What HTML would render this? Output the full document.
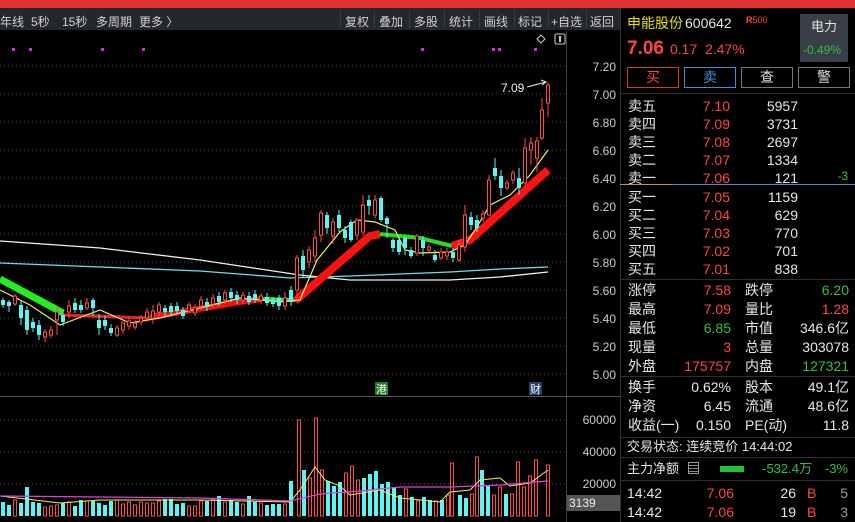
<!DOCTYPE html>
<html style="width:855px;height:522px;overflow:hidden"><head><meta charset="utf-8"><style>
*{margin:0;padding:0;box-sizing:border-box}
html,body{overflow:hidden}
body{width:855px;height:522px;background:#000;overflow:hidden;position:relative;font-family:"Liberation Sans","Noto Sans CJK SC",sans-serif;color:#e0e0e0;font-size:13px}
.a{position:absolute;white-space:nowrap;line-height:1}
.r{color:#ff4444}.g{color:#2fc144}.y{color:#e8e000}.w{color:#e6e6e6}
.tb{position:absolute;top:8px;left:0;width:620px;height:22px;background:#24272d;font-size:12px;color:#d0d0d0}
.tb span{position:absolute;top:5px}
.sep{position:absolute;top:2px;width:1px;height:18px;background:#3a3d44}
.btn{position:absolute;top:67px;width:52px;height:21px;border:1px solid #777;text-align:center;font-size:14px;line-height:19px}
.hl{position:absolute;left:620px;width:235px;height:1px;background:#2e2e2e}
.ax{position:absolute;left:570px;width:46px;text-align:right;font-size:12px;color:#ccc;line-height:1}
</style></head><body>
<div style="position:absolute;left:0;top:0;width:855px;height:8px;background:#e33232"></div>
<div class="tb">
<span style="left:0">年线</span><span style="left:31px">5秒</span><span style="left:62px">15秒</span><span style="left:96px">多周期</span><span style="left:139px">更多 〉</span>
<div class="sep" style="left:340px"></div><span style="left:345px">复权</span>
<div class="sep" style="left:374px"></div><span style="left:379px">叠加</span>
<div class="sep" style="left:409px"></div><span style="left:414px">多股</span>
<div class="sep" style="left:444px"></div><span style="left:449px">统计</span>
<div class="sep" style="left:479px"></div><span style="left:484px">画线</span>
<div class="sep" style="left:514px"></div><span style="left:518px">标记</span>
<div class="sep" style="left:548px"></div><span style="left:551px">+自选</span>
<div class="sep" style="left:586px"></div><span style="left:590px">返回</span>
</div>

<svg width="620" height="522" style="position:absolute;left:0;top:0">
<g stroke="#4a4a4a" stroke-dasharray="1,3">
<path d="M0 66H566M0 94H566M0 122H566M0 150H566M0 178H566M0 206H566M0 234H566M0 262H566M0 290H566M0 318H566M0 346H566M0 374H566M0 420H566M0 452H566M0 484H566"/>
</g>
<path d="M566.5 31V522" stroke="#444"/>
<path d="M0 396.5H620" stroke="#555"/>
<g fill="#d030d0"><rect x="12" y="48" width="3" height="3"/><rect x="29" y="48" width="3" height="3"/><rect x="101" y="48" width="3" height="3"/><rect x="142" y="48" width="3" height="3"/><rect x="421" y="48" width="3" height="3"/><rect x="492" y="48" width="3" height="3"/><rect x="498" y="48" width="3" height="3"/><rect x="534" y="48" width="3" height="3"/></g>
<path d="M541 35l4 4-4 4-4-4z" fill="none" stroke="#ccc"/>
<rect x="555" y="34" width="10" height="10" rx="1.5" fill="none" stroke="#ccc"/><rect x="559" y="36" width="2" height="6" fill="#ccc"/>
<polyline fill="none" stroke="#f0f0f0" stroke-width="1.3" points="0,241 100,248 200,260 300,275 350,280 450,280 500,277 548,272"/>
<polyline fill="none" stroke="#6fe0e0" stroke-width="1.3" points="0,263 100,267 200,271 290,278 350,276 450,272 500,269 548,267"/>
<polyline fill="none" stroke="#22ee22" stroke-width="7" points="0,279 63,313"/>
<polyline fill="none" stroke="#ee2222" stroke-width="3" points="63,315 150,318"/>
<polyline fill="none" stroke="#ee1111" stroke-width="6" points="150,317 240,302 262,299"/>
<polyline fill="none" stroke="#22ee22" stroke-width="4" points="262,299 295,300"/>
<polyline fill="none" stroke="#ff1111" stroke-width="8" points="295,301 370,236 380,234"/>
<polyline fill="none" stroke="#22dd22" stroke-width="4" points="380,234 420,238 452,246"/>
<polyline fill="none" stroke="#ff1111" stroke-width="8" points="452,246 470,240 548,170"/>
<polyline fill="none" stroke="#f0f060" stroke-width="1.2" points="0,290 30,305 60,325 100,310 130,323 160,318 200,308 240,298 280,302 300,300 317,260 340,232 357,220 375,222 395,230 405,250 420,253 450,252 465,245 475,230 490,205 510,195 530,175 548,150"/>
<path stroke="#5cf5f5" stroke-width="1" d="M3 298V308M9 300V312M21 300V325M27 306V335M33 318V332M39 320V340M63 310V326M75 298V313M81 300V313M93 298V316M99 314V335M105 316V330M111 324V336M165 305V316M171 303V316M177 302V314M183 307V319M207 298V311M219 292V306M231 288V302M237 291V304M249 292V305M255 290V303M267 293V306M273 297V307M279 295V310M291 286V306M303 250V278M327 212V234M339 210V232M345 226V243M351 220V242M369 195V215M381 196V222M387 216V238M393 238V252M399 238V255M405 236V255M411 247V258M423 236V256M435 250V262M453 248V262M471 212V230M477 215V232M495 158V180M501 170V196M519 168V195"/>
<path fill="#5cf5f5" d="M1 300h4v5h-4zM7 302h4v4h-4zM19 305h4v13h-4zM25 310h4v20h-4zM31 322h4v6h-4zM37 325h4v10h-4zM61 315h4v7h-4zM73 303h4v7h-4zM79 305h4v5h-4zM91 300h4v8h-4zM97 320h4v8h-4zM103 320h4v6h-4zM109 328h4v5h-4zM163 308h4v4h-4zM169 306h4v6h-4zM175 306h4v5h-4zM181 310h4v6h-4zM205 302h4v5h-4zM217 296h4v6h-4zM229 292h4v6h-4zM235 295h4v5h-4zM247 296h4v6h-4zM253 294h4v5h-4zM265 297h4v6h-4zM271 300h4v4h-4zM277 298h4v8h-4zM289 290h4v12h-4zM301 256h4v14h-4zM325 215h4v13h-4zM337 215h4v13h-4zM343 230h4v8h-4zM349 222h4v18h-4zM367 200h4v6h-4zM379 198h4v22h-4zM385 218h4v6h-4zM391 240h4v8h-4zM397 240h4v12h-4zM403 238h4v10h-4zM409 250h4v6h-4zM421 240h4v8h-4zM433 255h4v5h-4zM451 252h4v6h-4zM469 217h4v8h-4zM475 220h4v8h-4zM493 168h4v8h-4zM499 176h4v12h-4zM517 178h4v10h-4z"/>
<path stroke="#ff4a4a" stroke-width="1" d="M15 294V306M45 329V342M51 326V338M57 308V335M69 300V318M87 298V310M117 325V337M123 320V334M129 317V330M135 320V330M141 315V325M147 308V322M153 305V324M159 302V316M189 302V313M195 304V316M201 296V310M213 294V308M225 290V304M243 292V304M261 293V304M285 292V310M297 255V300M309 246V268M315 230V262M321 210V242M333 218V244M357 218V240M363 195V236M375 195V218M417 234V256M429 244V252M441 248V260M447 248V260M459 240V262M465 205V252M483 210V222M489 175V216M507 180V190M513 170V184M525 138V186M531 137V165M537 137V172M542 98V140M548 82V117"/>
<path fill="#000" stroke="#ff4a4a" stroke-width="1" d="M13.5 296h3v8h-3zM43.5 332h3v5h-3zM49.5 330h3v5h-3zM55.5 312h3v8h-3zM67.5 306h3v6h-3zM85.5 303h3v5h-3zM115.5 328h3v7h-3zM121.5 323h3v7h-3zM127.5 321h3v5h-3zM133.5 323h3v4h-3zM139.5 318h3v4h-3zM145.5 312h3v6h-3zM151.5 311h3v7h-3zM157.5 305h3v7h-3zM187.5 305h3v6h-3zM193.5 308h3v5h-3zM199.5 300h3v6h-3zM211.5 298h3v6h-3zM223.5 293h3v7h-3zM241.5 295h3v5h-3zM259.5 296h3v4h-3zM283.5 298h3v8h-3zM295.5 258h3v32h-3zM307.5 250h3v12h-3zM313.5 238h3v18h-3zM319.5 213h3v22h-3zM331.5 222h3v14h-3zM355.5 220h3v15h-3zM361.5 205h3v27h-3zM373.5 200h3v15h-3zM415.5 236h3v17h-3zM427.5 247h3v3h-3zM439.5 252h3v6h-3zM445.5 252h3v4h-3zM457.5 245h3v15h-3zM463.5 215h3v32h-3zM481.5 214h3v4h-3zM487.5 180h3v35h-3zM505.5 183h3v5h-3zM511.5 173h3v7h-3zM523.5 148h3v35h-3zM529.5 143h3v7h-3zM535.5 141h3v17h-3zM540.5 110h3v28h-3zM546.5 85h3v18h-3z"/>
<text x="501" y="92" fill="#eee" font-size="12" font-family="Liberation Sans">7.09</text>
<path d="M527 87L546 82M541 80l5 2-4 3" stroke="#eee" fill="none"/>
<rect x="375" y="382" width="13" height="13" fill="#1f7a2a"/><text x="376" y="393" fill="#fff" font-size="11" font-family="Noto Sans CJK SC">港</text>
<rect x="529" y="382" width="13" height="13" fill="#22406a"/><text x="530" y="393" fill="#fff" font-size="11" font-family="Noto Sans CJK SC">财</text>
<path fill="#5cf5f5" d="M1 502h4v14h-4zM7 505h4v11h-4zM19 503h4v13h-4zM25 487h4v29h-4zM31 502h4v14h-4zM37 503h4v13h-4zM61 503h4v13h-4zM73 506h4v10h-4zM79 500h4v16h-4zM91 501h4v15h-4zM97 503h4v13h-4zM103 505h4v11h-4zM109 501h4v15h-4zM163 499h4v17h-4zM169 499h4v17h-4zM175 504h4v12h-4zM181 503h4v13h-4zM205 501h4v15h-4zM217 496h4v20h-4zM229 500h4v16h-4zM235 502h4v14h-4zM247 496h4v20h-4zM253 502h4v14h-4zM265 505h4v11h-4zM271 504h4v12h-4zM277 504h4v12h-4zM289 481h4v35h-4zM302 470h4v46h-4zM326 481h4v35h-4zM332 486h4v30h-4zM338 482h4v34h-4zM362 478h4v38h-4zM368 474h4v42h-4zM374 471h4v45h-4zM380 484h4v32h-4zM386 482h4v34h-4zM392 487h4v29h-4zM398 495h4v21h-4zM410 497h4v19h-4zM422 497h4v19h-4zM428 500h4v16h-4zM440 500h4v16h-4zM458 495h4v21h-4zM464 498h4v18h-4zM480 470h4v46h-4zM486 486h4v30h-4zM504 494h4v22h-4z"/>
<path fill="none" stroke="#ff4a4a" stroke-width="1" d="M13.5 500h3v16h-3zM43.5 507h3v9h-3zM49.5 506h3v10h-3zM55.5 505h3v11h-3zM67.5 502h3v14h-3zM85.5 501h3v15h-3zM115.5 500h3v16h-3zM121.5 504h3v12h-3zM127.5 502h3v14h-3zM133.5 505h3v11h-3zM139.5 502h3v14h-3zM145.5 503h3v13h-3zM151.5 503h3v13h-3zM157.5 501h3v15h-3zM187.5 506h3v10h-3zM193.5 506h3v10h-3zM199.5 501h3v15h-3zM211.5 499h3v17h-3zM223.5 502h3v14h-3zM241.5 504h3v12h-3zM259.5 503h3v13h-3zM283.5 504h3v12h-3zM297.5 420h3v96h-3zM308.5 478h3v38h-3zM314.5 418h3v98h-3zM320.5 470h3v46h-3zM344.5 473h3v43h-3zM350.5 466h3v50h-3zM356.5 480h3v36h-3zM404.5 489h3v27h-3zM416.5 501h3v15h-3zM434.5 501h3v15h-3zM446.5 495h3v21h-3zM450.5 463h3v53h-3zM470.5 494h3v22h-3zM475.5 457h3v59h-3zM492.5 495h3v21h-3zM498.5 487h3v29h-3zM510.5 494h3v22h-3zM516.5 462h3v54h-3zM522.5 487h3v29h-3zM528.5 476h3v40h-3zM534.5 460h3v56h-3zM546.5 465h3v51h-3z"/>
<polyline fill="none" stroke="#f0f060" points="0,496 60,503 100,500 200,500 290,502 300,490 315,467 325,480 340,486 350,495 380,490 400,498 440,502 450,492 470,490 480,480 500,478 510,486 530,483 548,470"/>
<polyline fill="none" stroke="#e040e0" stroke-width="1.3" points="0,496 100,497 200,498 290,501 320,494 360,491 400,487 450,487 500,485 548,481"/>
</svg>
<div class="ax" style="top:61px">7.20</div><div class="ax" style="top:89px">7.00</div><div class="ax" style="top:117px">6.80</div><div class="ax" style="top:145px">6.60</div><div class="ax" style="top:173px">6.40</div><div class="ax" style="top:201px">6.20</div><div class="ax" style="top:229px">6.00</div><div class="ax" style="top:257px">5.80</div><div class="ax" style="top:285px">5.60</div><div class="ax" style="top:313px">5.40</div><div class="ax" style="top:341px">5.20</div><div class="ax" style="top:369px">5.00</div>
<div class="ax" style="top:414px">60000</div><div class="ax" style="top:446px">40000</div><div class="ax" style="top:478px">20000</div>
<div class="a" style="left:567px;top:495px;width:53px;height:16px;background:#555;color:#eee;font-size:12px;line-height:16px;padding-left:2px">3139</div>

<div style="position:absolute;left:620px;top:8px;width:1px;height:514px;background:#333"></div>
<div class="a y" style="left:627px;top:16px;font-size:14px">申能股份</div>
<div class="a w" style="left:685px;top:16px;font-size:14px">600642</div>
<div class="a r" style="left:746px;top:16px;font-size:9px"><b>R</b>500</div>
<div style="position:absolute;left:800px;top:14px;width:48px;height:48px;background:#3a3e47"></div>
<div class="a w" style="left:811px;top:20px;font-size:13px">电力</div>
<div class="a g" style="left:803px;top:44px;font-size:12px">-0.49%</div>
<div class="a r" style="left:627px;top:39px;font-size:19px;font-weight:bold">7.06</div>
<div class="a r" style="left:670px;top:42px;font-size:14px">0.17</div>
<div class="a r" style="left:705px;top:42px;font-size:14px">2.47%</div>
<div class="btn r" style="left:627px;border-color:#d33">买</div>
<div class="btn" style="left:684px;border-color:#4a8ed8;color:#4a8ed8">卖</div>
<div class="btn" style="left:741px">查</div>
<div class="btn" style="left:798px">警</div>
<div class="hl" style="top:93px"></div>

<div class="a w" style="left:628px;top:97px;line-height:18px;font-size:14px">卖五<br>卖四<br>卖三<br>卖二<br>卖一</div>
<div class="a r" style="left:690px;top:97px;width:40px;text-align:right;line-height:18px;font-size:14px">7.10<br>7.09<br>7.08<br>7.07<br>7.06</div>
<div class="a w" style="left:740px;top:97px;width:58px;text-align:right;line-height:18px;font-size:14px">5957<br>3731<br>2697<br>1334<br>121</div>
<div class="a g" style="left:830px;top:170px;width:18px;text-align:right;font-size:12px">-3</div>
<div style="position:absolute;left:620px;top:184px;width:52px;height:1px;background:#c89050"></div>
<div style="position:absolute;left:672px;top:184px;width:183px;height:1px;background:#5b80d0"></div>
<div class="a w" style="left:628px;top:188px;line-height:18px;font-size:14px">买一<br>买二<br>买三<br>买四<br>买五</div>
<div class="a r" style="left:690px;top:188px;width:40px;text-align:right;line-height:18px;font-size:14px">7.05<br>7.04<br>7.03<br>7.02<br>7.01</div>
<div class="a w" style="left:740px;top:188px;width:58px;text-align:right;line-height:18px;font-size:14px">1159<br>629<br>770<br>701<br>838</div>
<div class="hl" style="top:279px"></div>

<div class="a w" style="left:628px;top:281px;line-height:19px;font-size:14px">涨停<br>最高<br>最低<br>现量<br>外盘</div>
<div class="a" style="left:670px;top:281px;width:61px;text-align:right;line-height:19px;font-size:14px"><span class="r">7.58</span><br><span class="r">7.09</span><br><span class="g">6.85</span><br><span class="r">3</span><br><span class="r">175757</span></div>
<div class="a w" style="left:745px;top:281px;line-height:19px;font-size:14px">跌停<br>量比<br>市值<br>总量<br>内盘</div>
<div class="a" style="left:780px;top:281px;width:69px;text-align:right;line-height:19px;font-size:14px"><span class="g">6.20</span><br><span class="r">1.28</span><br><span class="w">346.6亿</span><br><span class="w">303078</span><br><span class="g">127321</span></div>
<div class="hl" style="top:376px"></div>
<div class="a w" style="left:628px;top:378px;line-height:19px;font-size:14px">换手<br>净资<br>收益(一)</div>
<div class="a w" style="left:670px;top:378px;width:61px;text-align:right;line-height:19px;font-size:14px">0.62%<br>6.45<br>0.150</div>
<div class="a w" style="left:745px;top:378px;line-height:19px;font-size:14px">股本<br>流通<br>PE(动)</div>
<div class="a w" style="left:780px;top:378px;width:69px;text-align:right;line-height:19px;font-size:14px">49.1亿<br>48.6亿<br>11.8</div>
<div class="hl" style="top:437px"></div>
<div class="a w" style="left:627px;top:440px;font-size:13px">交易状态: 连续竞价 14:44:02</div>
<div class="hl" style="top:457px"></div>
<div class="a w" style="left:627px;top:462px;font-size:13px">主力净额</div>
<div style="position:absolute;left:688px;top:462px;width:11px;height:12px;border:1px solid #999;background:repeating-linear-gradient(#000 0 2px,#888 2px 3px)"></div>
<div style="position:absolute;left:720px;top:466px;width:24px;height:6px;background:#22c33a"></div>
<div class="a g" style="left:760px;top:462px;width:52px;text-align:right;font-size:13px">-532.4万</div>
<div class="a g" style="left:820px;top:462px;width:28px;text-align:right;font-size:13px">-3%</div>
<div class="hl" style="top:480px"></div>
<div style="position:absolute;left:620px;top:481px;width:235px;height:41px;overflow:hidden">
<div class="a w" style="left:7px;top:3px;line-height:19px;font-size:14px">14:42<br>14:42<br>14:42</div>
<div class="a r" style="left:80px;top:3px;width:34px;text-align:right;line-height:19px;font-size:14px">7.06<br>7.06<br>7.05</div>
<div class="a w" style="left:150px;top:3px;width:26px;text-align:right;line-height:19px;font-size:14px">26<br>19<br>15</div>
<div class="a r" style="left:187px;top:3px;line-height:19px;font-size:14px">B<br>B<br>S</div>
<div class="a" style="left:210px;top:3px;width:18px;text-align:right;line-height:19px;font-size:14px;color:#999">5<br>3<br>1</div>
</div>
</body></html>
